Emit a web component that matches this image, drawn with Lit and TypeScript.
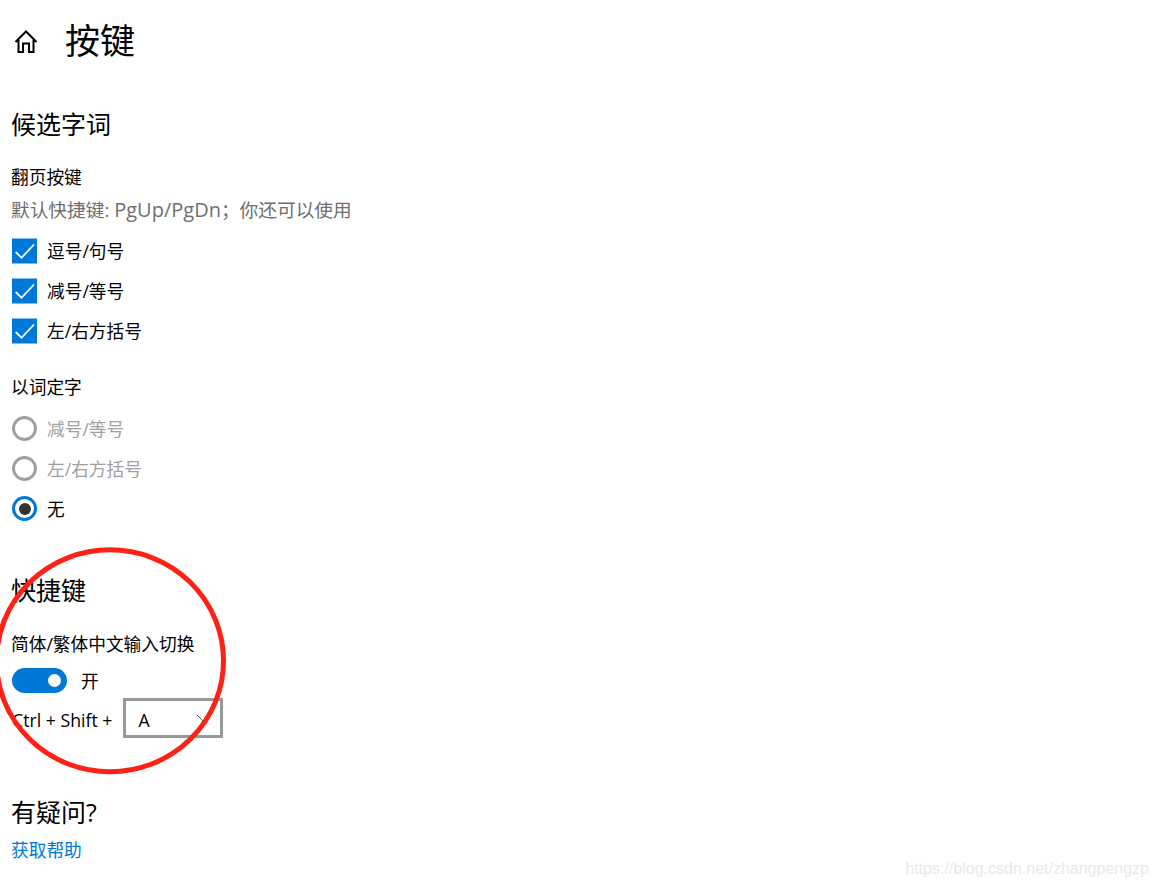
import { LitElement, css, html } from "lit";

export class AppRoot extends LitElement {
  static styles = css`
    :host {
      display: block;
      position: relative;
      width: 1158px;
      height: 886px;
      overflow: hidden;
      background: #fff;
      color: #000;
      font-family: "Open Sans", "Noto Sans CJK SC", sans-serif;
      font-size: 17.7px;
      line-height: 24px;
    }
    .page {
      display: flex;
      flex-direction: column;
      padding: 18px 0 0 12px;
    }
    .head {
      display: flex;
      align-items: center;
      gap: 27px;
      height: 46px;
      font-size: 35px;
      line-height: 46px;
    }
    .home {
      display: block;
      width: 26px;
      height: 26px;
      flex: none;
    }
    h2 {
      margin: 0 0 0 -1px;
      font-weight: 400;
      font-size: 25px;
      line-height: 34px;
    }
    .candidates {
      margin-top: 43px;
    }
    .label,
    .hint,
    .word,
    .switch-label,
    .link {
      margin-left: -1px;
    }
    .label {
      margin-top: 24px;
    }
    .hint {
      margin-top: 9px;
      font-size: 18.7px;
      color: #6f6f6f;
    }
    .latin {
      font-size: 20px;
    }
    .opts {
      display: flex;
      flex-direction: column;
      gap: 15px;
    }
    .opts.checks {
      margin-top: 16px;
    }
    .opts.radios {
      margin-top: 17px;
    }
    .opt {
      display: flex;
      align-items: center;
      gap: 10px;
      height: 25px;
    }
    .opt.off {
      color: #a0a0a0;
    }
    .check {
      display: block;
      width: 25px;
      height: 25px;
      flex: none;
      background: #0078d7;
      box-shadow: inset 0 1px 0 #7fbbeb, 0 1px 0 #7fbbeb;
    }
    .radio {
      box-sizing: border-box;
      display: flex;
      align-items: center;
      justify-content: center;
      width: 25px;
      height: 25px;
      flex: none;
      border-radius: 50%;
      border: 3px solid #a0a0a0;
    }
    .radio.on {
      border-color: #0078d7;
    }
    .radio.on::after {
      content: "";
      width: 12px;
      height: 12px;
      border-radius: 50%;
      background: #333;
    }
    .word {
      margin-top: 32px;
    }
    .shortcut {
      margin-top: 52px;
    }
    .switch-label {
      margin-top: 25px;
    }
    .switch-row {
      display: flex;
      align-items: center;
      gap: 14px;
      margin-top: 12px;
      height: 25px;
    }
    .switch {
      display: flex;
      align-items: center;
      justify-content: flex-end;
      box-sizing: border-box;
      width: 55px;
      height: 25px;
      padding-right: 6px;
      border-radius: 13px;
      background: #0078d7;
    }
    .switch::after {
      content: "";
      width: 13px;
      height: 13px;
      border-radius: 50%;
      background: #fff;
    }
    .combo-row {
      display: flex;
      align-items: center;
      gap: 11px;
      margin-top: 5px;
    }
    .combo-row span {
      padding-top: 3px;
    }
    .combo {
      box-sizing: border-box;
      display: flex;
      align-items: center;
      justify-content: space-between;
      width: 100px;
      height: 40px;
      padding: 0 8px 0 12px;
      border: 3px solid #999;
    }
    .chev {
      display: block;
      width: 16px;
      height: 16px;
    }
    .help {
      margin-top: 57px;
    }
    .link {
      margin-top: 9px;
      color: #0078d7;
    }
    .ring {
      position: absolute;
      left: 0;
      top: 540px;
      width: 240px;
      height: 240px;
      pointer-events: none;
    }
    .mark {
      position: absolute;
      right: 9px;
      bottom: 7px;
      font-family: "Liberation Sans", sans-serif;
      font-size: 16px;
      line-height: 20px;
      color: #e9e9e9;
    }
  `;

  private _check() {
    return html`<svg class="check" viewBox="0 0 25 25" aria-hidden="true">
      <path d="M3.7 14 L9.5 19.8 L22 6.5" fill="none" stroke="#fff" stroke-width="1.8" />
    </svg>`;
  }

  protected render() {
    return html`
      <div class="page">
        <div class="head">
          <svg class="home" viewBox="0 0 26 26" aria-hidden="true">
            <path
              d="M3.5 14 L14 3.5 L24.5 14 M6.5 12 V24 H11 V15.5 H17 V24 H21.5 V12"
              fill="none"
              stroke="#000"
              stroke-width="2"
            />
          </svg>
          <span>按键</span>
        </div>

        <h2 class="candidates">候选字词</h2>
        <div class="label">翻页按键</div>
        <div class="hint">默认快捷键: <span class="latin">PgUp/PgDn</span>；你还可以使用</div>
        <div class="opts checks">
          <div class="opt">${this._check()}<span>逗号/句号</span></div>
          <div class="opt">${this._check()}<span>减号/等号</span></div>
          <div class="opt">${this._check()}<span>左/右方括号</span></div>
        </div>

        <div class="word">以词定字</div>
        <div class="opts radios">
          <div class="opt off"><span class="radio"></span><span>减号/等号</span></div>
          <div class="opt off"><span class="radio"></span><span>左/右方括号</span></div>
          <div class="opt"><span class="radio on"></span><span>无</span></div>
        </div>

        <h2 class="shortcut">快捷键</h2>
        <div class="switch-label">简体/繁体中文输入切换</div>
        <div class="switch-row"><span class="switch"></span><span>开</span></div>
        <div class="combo-row">
          <span>Ctrl + Shift +</span>
          <div class="combo">
            <span>A</span>
            <svg class="chev" viewBox="0 0 16 16" aria-hidden="true">
              <path d="M1 5 L8 12 L15 5" fill="none" stroke="#555" stroke-width="1" />
            </svg>
          </div>
        </div>

        <h2 class="help">有疑问?</h2>
        <div class="link">获取帮助</div>
      </div>

      <svg class="ring" viewBox="0 0 240 240" aria-hidden="true">
        <ellipse cx="110" cy="120.8" rx="113.5" ry="111" fill="none" stroke="#ff2016" stroke-width="5" />
      </svg>
      <div class="mark">https://blog.csdn.net/zhangpengzp</div>
    `;
  }
}

customElements.define("app-root", AppRoot);
